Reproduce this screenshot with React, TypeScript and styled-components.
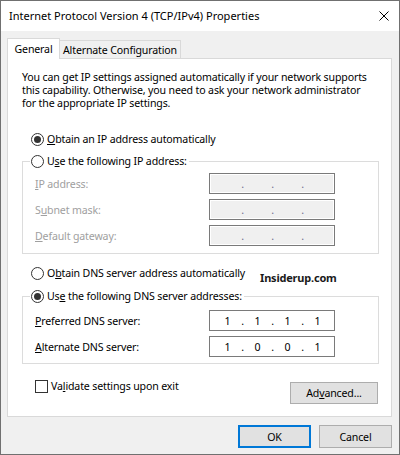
import React from "react";
import styled, { createGlobalStyle } from "styled-components";

const GlobalStyle = createGlobalStyle`
  html, body { margin: 0; padding: 0; background: #ffffff; }
  body {
    font-family: "Noto Sans", "Liberation Sans", sans-serif;
    font-size: 10.6px;
    letter-spacing: -0.15px;
    color: #000;
  }
  * { box-sizing: border-box; }
`;

const Window = styled.div`
  width: 400px;
  height: 455px;
  border: 1px solid #707070;
  display: flex;
  flex-direction: column;
  background: #f0f0f0;
`;

const TitleBar = styled.div`
  height: 30px;
  flex: none;
  background: #ffffff;
  display: flex;
  align-items: center;
  justify-content: space-between;
  padding: 0 10px 0 8px;
`;

const Title = styled.div`
  font-size: 11px;
  letter-spacing: 0;
  line-height: 16px;
  color: #000;
  margin-top: -1px;
`;

const CloseIcon = styled.svg`
  width: 10px;
  height: 10px;
  display: block;
  margin-top: -1px;
`;

const Client = styled.div`
  flex: 1;
  display: flex;
  flex-direction: column;
  padding: 7px 7px 6px 6px;
`;

const TabStrip = styled.div`
  height: 20px;
  display: flex;
  align-items: flex-end;
`;

const Tab = styled.div<{ $active?: boolean }>`
  border: 1px solid #d9d9d9;
  border-bottom: none;
  display: flex;
  align-items: center;
  justify-content: center;
  line-height: 14px;
  white-space: nowrap;
  ${(p) =>
    p.$active
      ? `
    width: 53px;
    height: 21px;
    background: #ffffff;
    margin-bottom: -1px;
    position: relative;
    z-index: 1;
    padding-bottom: 1px;
  `
      : `
    width: 121px;
    height: 18px;
    background: #f0f0f0;
    border-left: none;
  `}
`;

const Panel = styled.div`
  height: 359px;
  background: #ffffff;
  border: 1px solid #d9d9d9;
  padding: 12px 12px 0 14px;
  display: flex;
  flex-direction: column;
`;

const Intro = styled.p`
  margin: 0;
  line-height: 13px;
  white-space: nowrap;
`;

const RadioRow = styled.label<{ $mt: number }>`
  display: flex;
  align-items: center;
  gap: 3px;
  height: 16px;
  line-height: 16px;
  margin-top: ${(p) => p.$mt}px;
  padding-left: 9px;
  white-space: nowrap;
`;

const RadioCircle = styled.span<{ $checked?: boolean }>`
  width: 13px;
  height: 13px;
  flex: none;
  border-radius: 50%;
  border: 1px solid #333333;
  background: #ffffff;
  display: flex;
  align-items: center;
  justify-content: center;
  &::after {
    content: "";
    width: 7px;
    height: 7px;
    border-radius: 50%;
    background: ${(p) => (p.$checked ? "#333333" : "transparent")};
  }
`;

const Group = styled.fieldset<{ $mt: number }>`
  margin: ${(p) => p.$mt}px 0 0 0;
  padding: 0;
  min-width: 0;
  border: 1px solid #dcdcdc;
`;

const Legend = styled.legend`
  margin-left: 7px;
  padding: 0 2px 0 1px;
  height: 16px;
  line-height: 16px;
  display: flex;
  align-items: center;
  gap: 3px;
  white-space: nowrap;
`;

const GroupBody = styled.div<{ $pt: number; $pb: number }>`
  display: flex;
  flex-direction: column;
  gap: 5px;
  padding: ${(p) => p.$pt}px 12px ${(p) => p.$pb}px 12px;
`;

const FieldRow = styled.div`
  display: flex;
  align-items: center;
  height: 21px;
`;

const FieldLabel = styled.span<{ $disabled?: boolean }>`
  width: 174px;
  flex: none;
  color: ${(p) => (p.$disabled ? "#a0a0a0" : "#000000")};
  line-height: 14px;
`;

const IpBox = styled.div<{ $disabled?: boolean }>`
  width: 126px;
  height: 21px;
  border: 1px solid #7a7a7a;
  background: ${(p) => (p.$disabled ? "#f0f0f0" : "#ffffff")};
  box-shadow: ${(p) => (p.$disabled ? "inset 0 0 0 1px #ffffff" : "none")};
  display: flex;
  align-items: center;
  padding-left: 4px;
  color: ${(p) => (p.$disabled ? "#6d6d8d" : "#000000")};
`;

const Octet = styled.span`
  width: 27px;
  text-align: center;
  line-height: 14px;
`;

const Dot = styled.span`
  width: 3px;
  text-align: center;
  line-height: 14px;
`;

const AK = styled.span`
  text-decoration: underline;
  text-underline-offset: 1px;
`;

const DnsAutoRow = styled.div`
  display: flex;
  align-items: flex-start;
  height: 16px;
  margin-top: 11px;
`;

const Watermark = styled.span`
  margin-left: 15px;
  margin-top: 5px;
  font-weight: 700;
  font-size: 11px;
  letter-spacing: -0.2px;
  line-height: 16px;
  color: #1a1a1a;
  white-space: nowrap;
`;

const BottomRow = styled.div`
  display: flex;
  justify-content: space-between;
  align-items: flex-start;
  margin-top: 16px;
  padding-left: 13px;
`;

const CheckLabel = styled.label`
  display: flex;
  align-items: center;
  gap: 3px;
  height: 13px;
  line-height: 13px;
  white-space: nowrap;
`;

const CheckBox = styled.span`
  width: 13px;
  height: 13px;
  flex: none;
  border: 1px solid #333333;
  background: #ffffff;
`;

const Button = styled.button<{ $w: number; $h: number; $default?: boolean }>`
  width: ${(p) => p.$w}px;
  height: ${(p) => p.$h}px;
  background: #e1e1e1;
  border: ${(p) => (p.$default ? "2px solid #0078d7" : "1px solid #adadad")};
  border-radius: 0;
  font-family: "Noto Sans", "Liberation Sans", sans-serif;
  font-size: 10.6px;
  letter-spacing: -0.15px;
  line-height: 14px;
  color: #000;
  padding: 0;
  display: flex;
  align-items: center;
  justify-content: center;
`;

const AdvancedButton = styled(Button)`
  margin-top: 2px;
  margin-right: 1px;
`;

const Footer = styled.div`
  display: flex;
  justify-content: flex-end;
  gap: 8px;
  margin-top: 8px;
`;

function Ip({ parts, disabled }: { parts: string[]; disabled?: boolean }) {
  return (
    <IpBox $disabled={disabled}>
      {parts.map((p, i) => (
        <React.Fragment key={i}>
          {i > 0 && <Dot>.</Dot>}
          <Octet>{p}</Octet>
        </React.Fragment>
      ))}
    </IpBox>
  );
}

export default function App() {
  const empty = ["", "", "", ""];
  return (
    <Window>
      <GlobalStyle />
      <TitleBar>
        <Title>Internet Protocol Version 4 (TCP/IPv4) Properties</Title>
        <CloseIcon viewBox="0 0 10 10">
          <path d="M0.5 0.5 L9.5 9.5 M9.5 0.5 L0.5 9.5" stroke="#000" strokeWidth="1" fill="none" />
        </CloseIcon>
      </TitleBar>
      <Client>
        <TabStrip>
          <Tab $active>General</Tab>
          <Tab>Alternate Configuration</Tab>
        </TabStrip>
        <Panel>
          <Intro>
            You can get IP settings assigned automatically if your network supports
            <br />
            this capability. Otherwise, you need to ask your network administrator
            <br />
            for the appropriate IP settings.
          </Intro>

          <RadioRow $mt={21}>
            <RadioCircle $checked />
            <span>
              <AK>O</AK>btain an IP address automatically
            </span>
          </RadioRow>

          <Group $mt={6}>
            <Legend>
              <RadioCircle />
              <span>
                U<AK>s</AK>e the following IP address:
              </span>
            </Legend>
            <GroupBody $pt={4} $pb={7}>
              <FieldRow>
                <FieldLabel $disabled>
                  <AK>I</AK>P address:
                </FieldLabel>
                <Ip parts={empty} disabled />
              </FieldRow>
              <FieldRow>
                <FieldLabel $disabled>
                  S<AK>u</AK>bnet mask:
                </FieldLabel>
                <Ip parts={empty} disabled />
              </FieldRow>
              <FieldRow>
                <FieldLabel $disabled>
                  <AK>D</AK>efault gateway:
                </FieldLabel>
                <Ip parts={empty} disabled />
              </FieldRow>
            </GroupBody>
          </Group>

          <DnsAutoRow>
            <RadioRow $mt={0}>
              <RadioCircle />
              <span>
                O<AK>b</AK>tain DNS server address automatically
              </span>
            </RadioRow>
            <Watermark>Insiderup.com</Watermark>
          </DnsAutoRow>

          <Group $mt={7}>
            <Legend>
              <RadioCircle $checked />
              <span>
                Us<AK>e</AK> the following DNS server addresses:
              </span>
            </Legend>
            <GroupBody $pt={6} $pb={6}>
              <FieldRow>
                <FieldLabel>
                  <AK>P</AK>referred DNS server:
                </FieldLabel>
                <Ip parts={["1", "1", "1", "1"]} />
              </FieldRow>
              <FieldRow>
                <FieldLabel>
                  <AK>A</AK>lternate DNS server:
                </FieldLabel>
                <Ip parts={["1", "0", "0", "1"]} />
              </FieldRow>
            </GroupBody>
          </Group>

          <BottomRow>
            <CheckLabel>
              <CheckBox />
              <span>
                Va<AK>l</AK>idate settings upon exit
              </span>
            </CheckLabel>
            <AdvancedButton $w={88} $h={22}>
              Ad<AK>v</AK>anced...
            </AdvancedButton>
          </BottomRow>
        </Panel>
        <Footer>
          <Button $w={73} $h={23} $default>
            OK
          </Button>
          <Button $w={73} $h={23}>
            Cancel
          </Button>
        </Footer>
      </Client>
    </Window>
  );
}
